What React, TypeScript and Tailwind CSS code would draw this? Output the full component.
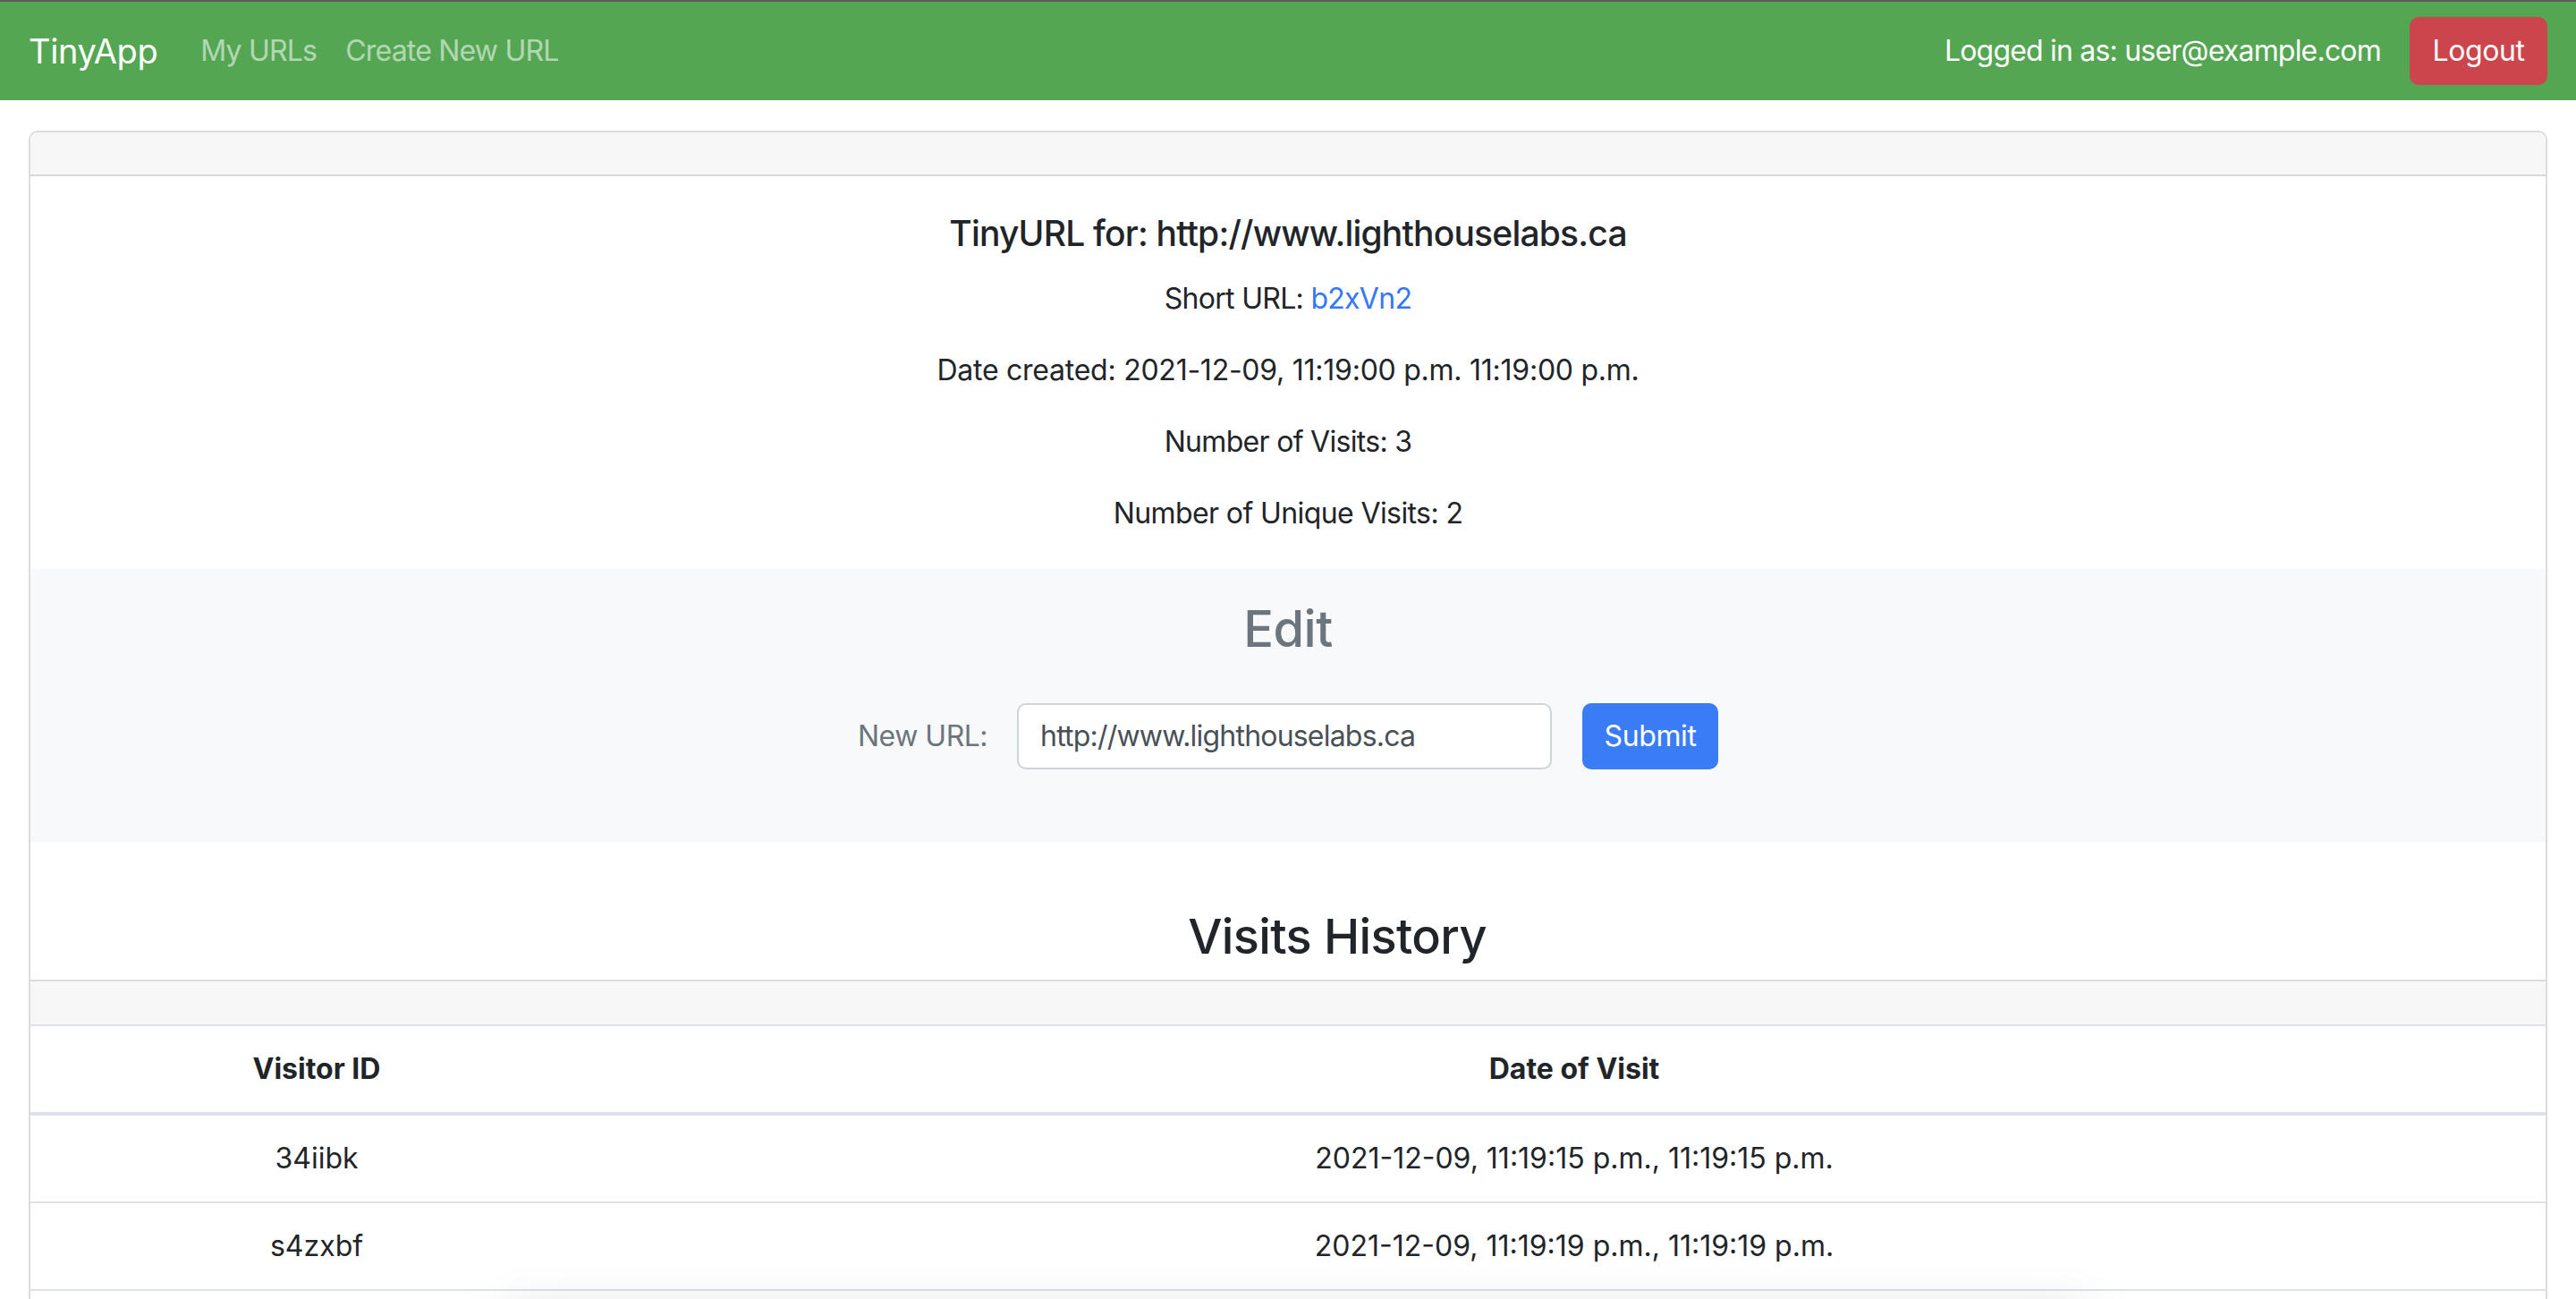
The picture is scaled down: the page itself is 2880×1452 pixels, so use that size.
export default function App() {
  const rows = [
    { id: "34iibk", date: "2021-12-09, 11:19:15 p.m., 11:19:15 p.m." },
    { id: "s4zxbf", date: "2021-12-09, 11:19:19 p.m., 11:19:19 p.m." },
  ];
  return (
    <div className="relative min-h-[1452px] overflow-hidden bg-white text-[#212529] font-['Inter','Noto_Sans',sans-serif]">
      <nav className="flex h-[112px] items-center border-t-2 border-[#5b5b5b] bg-[#54a653] px-8">
        <span className="mr-8 text-[38px] leading-[60px] tracking-[-0.4px] text-white">TinyApp</span>
        <a className="px-4 text-[32px] leading-[48px] tracking-[-0.8px] text-white/55">My URLs</a>
        <a className="px-4 text-[32px] leading-[48px] tracking-[-0.8px] text-white/55">Create New URL</a>
        <div className="ml-auto flex items-center gap-8">
          <span className="text-[32px] leading-[48px] tracking-[-0.8px] text-white">Logged in as: user@example.com</span>
          <button className="h-[76px] w-[154px] rounded-[10px] bg-[#cc454c] text-[32px] leading-[48px] tracking-[-0.4px] text-white">
            Logout
          </button>
        </div>
      </nav>

      <div className="mx-8 mt-[34px] overflow-hidden rounded-t-[10px] border-2 border-[#dcdcdc]">
        <div className="h-[49px] border-b-2 border-[#d9d9d9] bg-[#f7f7f7]" />

        <div className="pt-[35px] pb-[6px] text-center">
          <h4 className="text-[39px] font-medium leading-[58px] tracking-[-0.8px]">TinyURL for: http://www.lighthouselabs.ca</h4>
          <p className="mt-5 mb-8 text-[32px] leading-[48px] tracking-[-0.7px]">
            Short URL: <a className="text-[#3478f6]">b2xVn2</a>
          </p>
          <p className="mb-8 text-[32px] leading-[48px] tracking-[-0.25px]">Date created: 2021-12-09, 11:19:00 p.m. 11:19:00 p.m.</p>
          <p className="mb-8 text-[32px] leading-[48px] tracking-[-0.7px]">Number of Visits: 3</p>
          <p className="mb-8 text-[32px] leading-[48px] tracking-[-0.6px]">Number of Unique Visits: 2</p>
        </div>

        <div className="h-[305px] bg-[#f8f9fa] pt-[34px]">
          <h3 className="text-center text-[56px] font-medium leading-[67px] tracking-[-0.5px] text-[#6c757d]">Edit</h3>
          <div className="mt-[49px] flex items-center justify-center">
            <label className="mr-[33px] text-[32px] leading-[48px] tracking-[-0.5px] text-[#6c757d]">New URL:</label>
            <div className="flex h-[74px] w-[598px] items-center rounded-[10px] border-2 border-[#ced4da] bg-white px-6 text-[32px] leading-[48px] tracking-[-0.8px] text-[#495057]">
              http://www.lighthouselabs.ca
            </div>
            <button className="ml-[34px] h-[74px] w-[152px] rounded-[10px] bg-[#3a7cf6] text-[32px] leading-[48px] tracking-[-0.4px] text-white">
              Submit
            </button>
          </div>
        </div>

        <div className="border-b-2 border-[#dcdcdc] pt-[67px] pb-[10px] pl-[110px] text-center">
          <h2 className="text-[54px] font-medium leading-[77px] tracking-[-0.6px]">Visits History</h2>
        </div>
        <div className="h-[50px] border-b-2 border-[#dee2e6] bg-[#f7f7f7]" />

        <div className="grid h-[100px] grid-cols-[640px_1fr] items-center border-b-4 border-[#dee2e6] text-center text-[32px] font-bold leading-[48px]">
          <div>Visitor ID</div>
          <div>Date of Visit</div>
        </div>
        {rows.map((r, i) => (
          <div
            key={i}
            className="grid h-[98px] grid-cols-[640px_1fr] items-center border-b-2 border-[#dee2e6] text-center text-[32px] leading-[48px]"
          >
            <div>{r.id}</div>
            <div>{r.date}</div>
          </div>
        ))}
        <div className="h-[60px]" />
      </div>

      <div className="absolute left-[560px] top-[1470px] h-[120px] w-[1780px] rounded-[24px] bg-white shadow-[0_0_60px_rgba(0,0,0,0.16)]" />
    </div>
  );
}
